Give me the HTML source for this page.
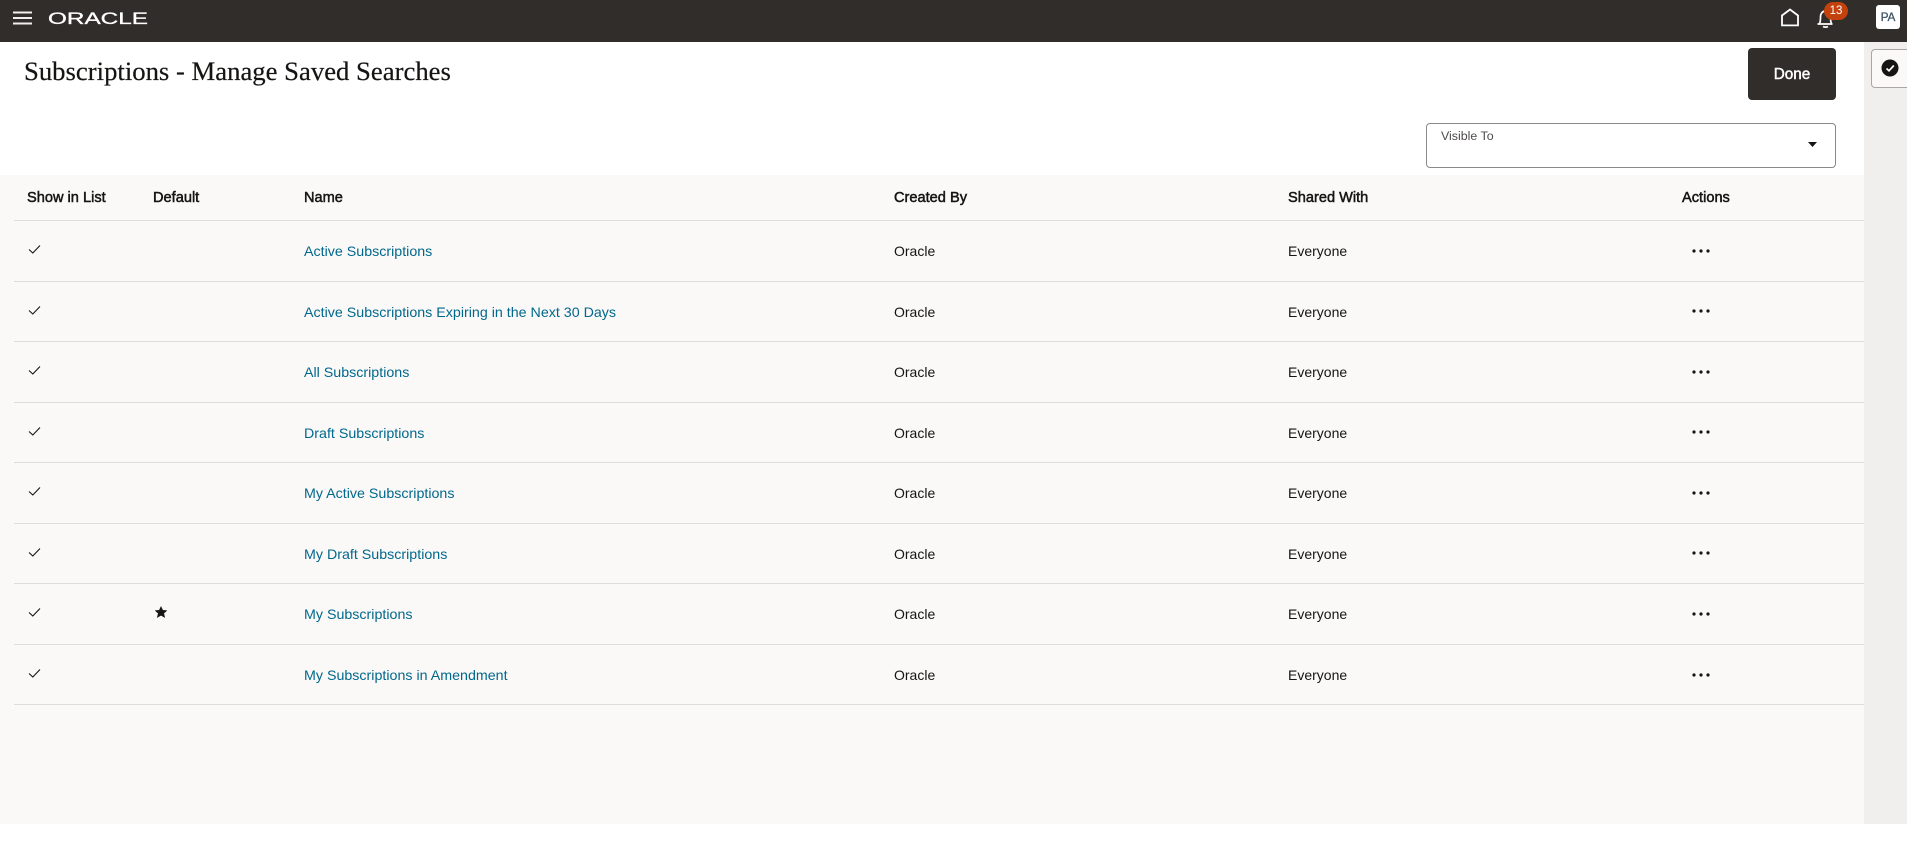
<!DOCTYPE html>
<html lang="en"><head><meta charset="utf-8"><title>Subscriptions - Manage Saved Searches</title>
<style>
html,body{margin:0;padding:0;width:1907px;height:861px;overflow:hidden;background:#fff}
body{position:relative;font-family:"Liberation Sans",sans-serif;font-size:14px;color:#161513}
.a{position:absolute;white-space:nowrap}
.h{top:189px;line-height:18px;font-weight:400;font-size:14.6px;-webkit-text-stroke:.5px #161513;color:#161513}
.t{line-height:18px;font-size:14px}
.l{color:#00688c;font-size:14.25px;margin-top:1px}
.line{position:absolute;left:14px;width:1850px;height:1px;background:#dfdddb}
svg{position:absolute;display:block}
</style></head><body>
<div class="a" style="left:0;top:0;width:1907px;height:42px;background:#312d2a"></div>
<svg style="left:13px;top:11px" width="19" height="14"><path d="M0 1.500h19M0 7h19M0 12.500h19" stroke="#f1efed" stroke-width="2"/></svg>
<svg style="left:48px;top:8px" width="101" height="20"><text x="0" y="16" font-family="Liberation Sans" font-size="17" fill="#fff" stroke="#fff" stroke-width=".3" textLength="100" lengthAdjust="spacingAndGlyphs">ORACLE</text></svg>
<svg style="left:1780px;top:8px" width="20" height="19"><path d="M2 17.400V7.500L10 1.500l8 6v9.900z" fill="none" stroke="#fff" stroke-width="1.800"/></svg>
<svg style="left:1816px;top:8px" width="20" height="20"><path d="M1.500 16h15M3.500 15.500c1-1.500 1-3 1-6.500 0-3.500 2-6 5-6s5 2.500 5 6c0 3.500 0 5 1 6.500M7 18.500c1.500 .8 3.500 .8 5 0" fill="none" stroke="#fff" stroke-width="1.700"/></svg>
<div class="a" style="left:1824px;top:2px;width:24px;height:18px;border-radius:9px;background:#c2410c;color:#fff;font-size:11.500px;line-height:18px;text-align:center">13</div>
<div class="a" style="left:1876px;top:5px;width:24px;height:24px;border-radius:3px;background:#fff;color:#3b5566;font-size:11.800px;-webkit-text-stroke:.3px #3b5566;line-height:24px;text-align:center">PA</div>

<div class="a" style="left:24px;top:55px;font-family:'Liberation Serif',serif;font-size:26.700px;-webkit-text-stroke:.2px #161513;line-height:32px;color:#161513">Subscriptions - Manage Saved Searches</div>
<div class="a" style="left:1748px;top:48px;width:88px;height:52px;border-radius:4px;background:#312d2a"></div>
<div class="a" style="left:1748px;top:49px;width:88px;color:#fff;font-size:15.300px;-webkit-text-stroke:.45px #fff;line-height:52px;text-align:center">Done</div>
<div class="a" style="left:1426px;top:123px;width:408px;height:43px;border:1px solid #8b8885;border-radius:4px;background:#fff"></div>
<div class="a" style="left:1441px;top:128px;font-size:12.400px;line-height:16px;color:#4f4c4a">Visible To</div>
<svg style="left:1808px;top:142px" width="9" height="6"><path d="M0 0h9L4.500 5z" fill="#161513"/></svg>

<div class="a" style="left:1864px;top:42px;width:43px;height:782px;background:#f1efed"></div>
<div class="a" style="left:1871px;top:49px;width:40px;height:37px;border:1px solid #a9a6a3;border-radius:4px;background:#fbf9f8"></div>
<svg style="left:1881px;top:59px" width="18" height="18"><circle cx="9" cy="9" r="8.500" fill="#161513"/><path d="M5.500 9.500l2.500 2.300L12.800 6.500" fill="none" stroke="#fff" stroke-width="1.700"/></svg>

<div class="a" style="left:0;top:175px;width:1864px;height:649px;background:#fbf9f8"></div>

<div class="a h" style="left:27px">Show in List</div>
<div class="a h" style="left:153px">Default</div>
<div class="a h" style="left:304px">Name</div>
<div class="a h" style="left:894px">Created By</div>
<div class="a h" style="left:1288px">Shared With</div>
<div class="a h" style="left:1682px">Actions</div>

<div class="line" style="top:220px"></div>
<div class="line" style="top:281px"></div>
<div class="line" style="top:341px"></div>
<div class="line" style="top:402px"></div>
<div class="line" style="top:462px"></div>
<div class="line" style="top:523px"></div>
<div class="line" style="top:583px"></div>
<div class="line" style="top:644px"></div>
<div class="line" style="top:704px"></div>

<svg style="left:28px;top:243.500px" width="13" height="11"><path d="M1 5.500l3.800 3.500L12 1.500" fill="none" stroke="#161513" stroke-width="1.100"/></svg>
<svg style="left:28px;top:304.500px" width="13" height="11"><path d="M1 5.500l3.800 3.500L12 1.500" fill="none" stroke="#161513" stroke-width="1.100"/></svg>
<svg style="left:28px;top:364.500px" width="13" height="11"><path d="M1 5.500l3.800 3.500L12 1.500" fill="none" stroke="#161513" stroke-width="1.100"/></svg>
<svg style="left:28px;top:425.500px" width="13" height="11"><path d="M1 5.500l3.800 3.500L12 1.500" fill="none" stroke="#161513" stroke-width="1.100"/></svg>
<svg style="left:28px;top:485.500px" width="13" height="11"><path d="M1 5.500l3.800 3.500L12 1.500" fill="none" stroke="#161513" stroke-width="1.100"/></svg>
<svg style="left:28px;top:546.500px" width="13" height="11"><path d="M1 5.500l3.800 3.500L12 1.500" fill="none" stroke="#161513" stroke-width="1.100"/></svg>
<svg style="left:28px;top:606.500px" width="13" height="11"><path d="M1 5.500l3.800 3.500L12 1.500" fill="none" stroke="#161513" stroke-width="1.100"/></svg>
<svg style="left:28px;top:667.500px" width="13" height="11"><path d="M1 5.500l3.800 3.500L12 1.500" fill="none" stroke="#161513" stroke-width="1.100"/></svg>

<svg style="left:154.500px;top:606px" width="12" height="12" viewBox="0 0 13 13"><path d="M6.500 .5l1.900 4.100 4.500.4-3.400 3 1.100 4.500-4.100-2.400-4.100 2.400 1.100-4.500-3.400-3 4.500-.4z" fill="#161513" stroke="#161513" stroke-width=".5"/></svg>

<div class="a t l" style="left:304px;top:242px">Active Subscriptions</div>
<div class="a t l" style="left:304px;top:303px">Active Subscriptions Expiring in the Next 30 Days</div>
<div class="a t l" style="left:304px;top:363px">All Subscriptions</div>
<div class="a t l" style="left:304px;top:424px">Draft Subscriptions</div>
<div class="a t l" style="left:304px;top:484px">My Active Subscriptions</div>
<div class="a t l" style="left:304px;top:545px">My Draft Subscriptions</div>
<div class="a t l" style="left:304px;top:605px">My Subscriptions</div>
<div class="a t l" style="left:304px;top:666px">My Subscriptions in Amendment</div>

<div class="a t" style="left:894px;top:242px">Oracle</div>
<div class="a t" style="left:894px;top:303px">Oracle</div>
<div class="a t" style="left:894px;top:363px">Oracle</div>
<div class="a t" style="left:894px;top:424px">Oracle</div>
<div class="a t" style="left:894px;top:484px">Oracle</div>
<div class="a t" style="left:894px;top:545px">Oracle</div>
<div class="a t" style="left:894px;top:605px">Oracle</div>
<div class="a t" style="left:894px;top:666px">Oracle</div>

<div class="a t" style="left:1288px;top:242px">Everyone</div>
<div class="a t" style="left:1288px;top:303px">Everyone</div>
<div class="a t" style="left:1288px;top:363px">Everyone</div>
<div class="a t" style="left:1288px;top:424px">Everyone</div>
<div class="a t" style="left:1288px;top:484px">Everyone</div>
<div class="a t" style="left:1288px;top:545px">Everyone</div>
<div class="a t" style="left:1288px;top:605px">Everyone</div>
<div class="a t" style="left:1288px;top:666px">Everyone</div>

<svg style="left:1692px;top:249px" width="18" height="4"><circle cx="2" cy="2" r="1.600" fill="#161513"/><circle cx="9" cy="2" r="1.600" fill="#161513"/><circle cx="16" cy="2" r="1.600" fill="#161513"/></svg>
<svg style="left:1692px;top:309px" width="18" height="4"><circle cx="2" cy="2" r="1.600" fill="#161513"/><circle cx="9" cy="2" r="1.600" fill="#161513"/><circle cx="16" cy="2" r="1.600" fill="#161513"/></svg>
<svg style="left:1692px;top:370px" width="18" height="4"><circle cx="2" cy="2" r="1.600" fill="#161513"/><circle cx="9" cy="2" r="1.600" fill="#161513"/><circle cx="16" cy="2" r="1.600" fill="#161513"/></svg>
<svg style="left:1692px;top:430px" width="18" height="4"><circle cx="2" cy="2" r="1.600" fill="#161513"/><circle cx="9" cy="2" r="1.600" fill="#161513"/><circle cx="16" cy="2" r="1.600" fill="#161513"/></svg>
<svg style="left:1692px;top:491px" width="18" height="4"><circle cx="2" cy="2" r="1.600" fill="#161513"/><circle cx="9" cy="2" r="1.600" fill="#161513"/><circle cx="16" cy="2" r="1.600" fill="#161513"/></svg>
<svg style="left:1692px;top:551px" width="18" height="4"><circle cx="2" cy="2" r="1.600" fill="#161513"/><circle cx="9" cy="2" r="1.600" fill="#161513"/><circle cx="16" cy="2" r="1.600" fill="#161513"/></svg>
<svg style="left:1692px;top:612px" width="18" height="4"><circle cx="2" cy="2" r="1.600" fill="#161513"/><circle cx="9" cy="2" r="1.600" fill="#161513"/><circle cx="16" cy="2" r="1.600" fill="#161513"/></svg>
<svg style="left:1692px;top:673px" width="18" height="4"><circle cx="2" cy="2" r="1.600" fill="#161513"/><circle cx="9" cy="2" r="1.600" fill="#161513"/><circle cx="16" cy="2" r="1.600" fill="#161513"/></svg>
</body></html>
